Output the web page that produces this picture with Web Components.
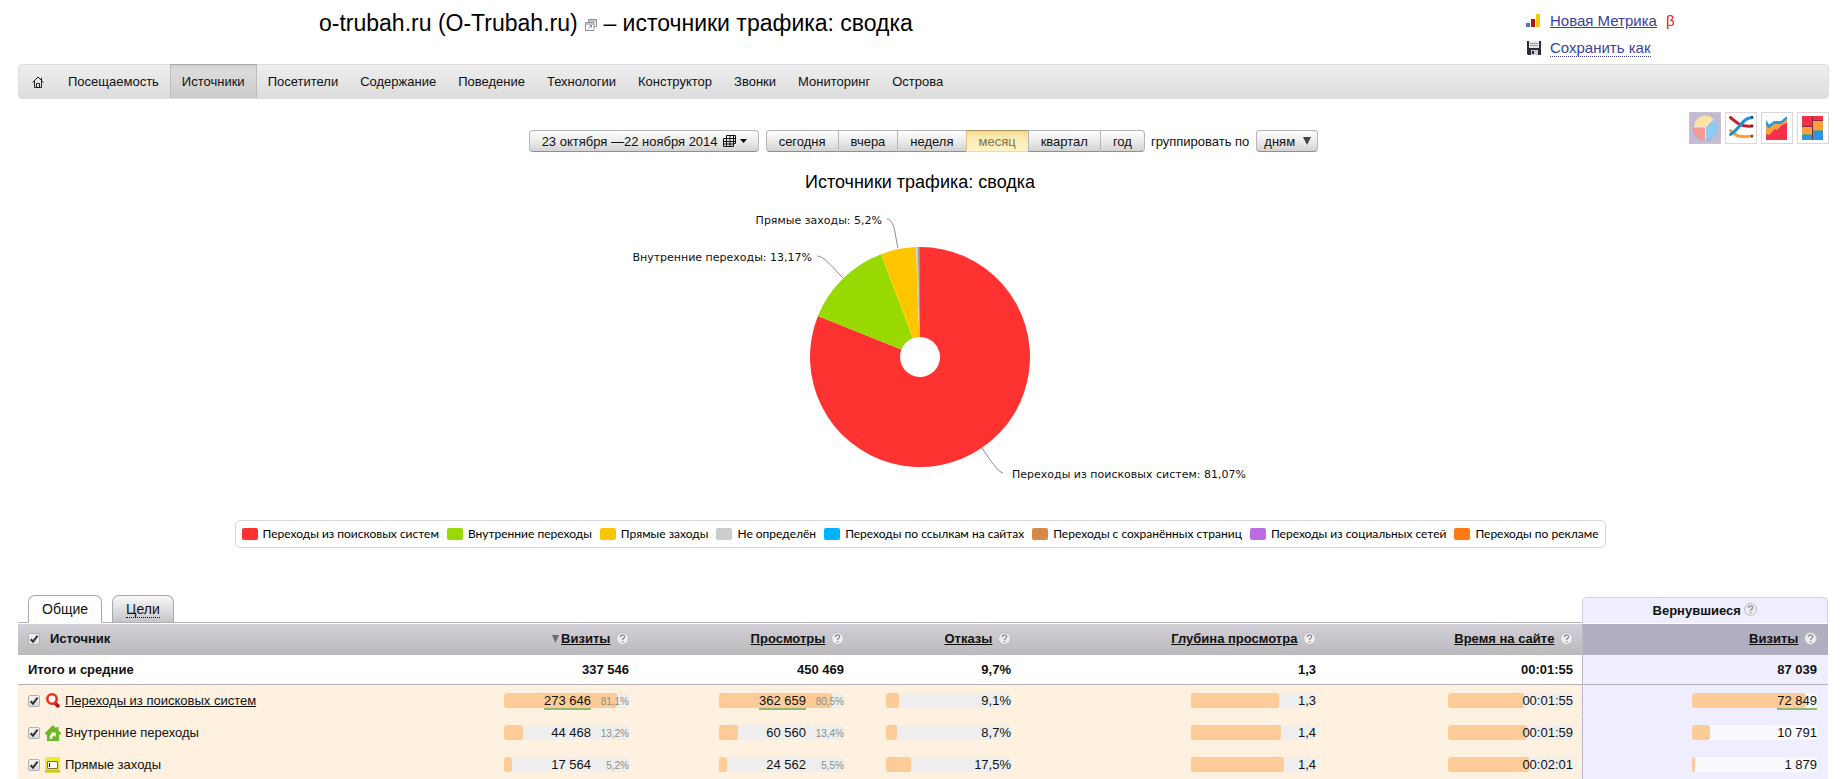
<!DOCTYPE html>
<html lang="ru">
<head>
<meta charset="utf-8">
<title>Источники трафика: сводка</title>
<style>
html{background:#fff}
body{margin:0;font:13px/15px "Liberation Sans",Arial,sans-serif;color:#111;overflow-x:hidden}
</style>
</head>
<body>
<metrika-app></metrika-app>

<script>
function define(name, html, setup) {
  customElements.define(name, class extends HTMLElement {
    connectedCallback() {
      if (this.shadowRoot) return;
      const t = document.createElement('template');
      t.innerHTML = html;
      this.attachShadow({ mode: 'open' }).append(t.content.cloneNode(true));
      if (setup) setup.call(this, this.shadowRoot);
    }
  });
}

/* Round question mark */
define('help-mark', `<style>
:host{display:inline-block;width:13px;height:13px;vertical-align:middle}
svg{display:block}
</style>
<svg width="13" height="13" viewBox="0 0 13 13" role="img" aria-label="Справка"><circle cx="6.5" cy="6.5" r="6" fill="#ecebee" stroke="#bdbcc2"/><path d="M4.4 5c0-2.8 4.2-2.7 4.2-.3 0 1.500-2 1.500-2 3.200M6.600 9v1.400" fill="none" stroke="#8d8d93" stroke-width="1.300"/></svg>`);

/* Tick box */
define('tick-box', `<style>
:host{display:inline-grid;width:12px;height:12px}
input,svg{grid-area:1/1;margin:0}
input{appearance:none;width:12px;height:12px;border:1px solid #b3b1b0;border-radius:2px;background:linear-gradient(#f2f2f2,#dcdcdc)}
svg{pointer-events:none;display:none}
input:checked+svg{display:block}
</style>
<input type="checkbox" checked><svg width="12" height="12" viewBox="0 0 12 12"><path d="M2.700 6.200 5 8.600 9.600 2.600" fill="none" stroke="#333" stroke-width="2"/></svg>`,
function (r) { r.querySelector('input').setAttribute('aria-label', this.getAttribute('label')); });

/* Number over a horizontal bar */
define('value-bar', `<style>
:host{display:flex;justify-content:flex-end;width:125px;height:15px;line-height:15px;margin-left:auto;border-radius:3px;position:relative;background:var(--track,#eeeeef)}
i{position:absolute;left:0;top:0;bottom:0;border-radius:3px;background:#fdcb98}
span{position:relative}
::slotted(small){display:inline-block;width:38px;font-size:10px;color:#8b9084}
</style>
<i></i><span><slot></slot></span>`,
function (r) { r.querySelector('i').style.width = this.getAttribute('fill') + '%'; });

/* Page heading and account links */
define('page-header', `<style>
:host{display:flex;justify-content:space-between;align-items:flex-start;height:64px;padding:0 166px 0 319px;box-sizing:border-box}
h1{margin:10px 0 0;font-size:23px;line-height:26px;font-weight:400;color:#000;white-space:nowrap}
h1 svg{margin-left:1px}
ul{list-style:none;margin:7px 0 0;padding:0;width:148px;font-size:15px;line-height:17px}
li{display:flex;align-items:center;height:27px;white-space:nowrap}
li svg{flex:none;margin-right:9px}
a{color:#3c3f9e}
a.save{text-decoration:none;border-bottom:1px dotted #3c3f9e}
b{font-weight:400;color:#d22;margin-left:9px}
</style>
<h1>o-trubah.ru (O-Trubah.ru) <svg width="12" height="12" viewBox="0 0 12 12" fill="none" stroke="#8a9299"><path d="M3.500 3V.5h8v7H9M3.500 2h8M.5 3.500H9v8H.5zM.5 5h8.500M3.500 9.500l3-3M4.500 6.500h2v2"/></svg> – источники трафика: сводка</h1>
<ul>
<li><svg width="15" height="13" viewBox="0 0 15 13"><path fill="#5a74b8" d="M0 9h4v4H0z"/><path fill="#b5121b" d="M5 5h4v8H5z"/><path fill="#f6c915" d="M10 0h4v13h-4z"/></svg><a href="#new">Новая Метрика</a><b>β</b></li>
<li><svg width="15" height="14" viewBox="0 0 15 14"><path fill="#2e2e33" d="M1 0h14v14H2l-1-1z"/><path fill="#e4e6ea" d="M3 0h10v7H3z"/><path stroke="#8ba0bd" d="M4 2.500h8M4 4.500h8"/><path fill="#c9cbd0" d="M5 9h7v5H5z"/><path fill="#2e2e33" d="M6 10h2v3H6z"/></svg><a class="save" href="#save">Сохранить как</a></li>
</ul>`);

/* Main navigation */
define('main-nav', `<style>
:host{display:block;margin:0 11px 0 18px}
nav{display:flex;height:33px;border:1px solid #dedede;border-radius:4px;background:linear-gradient(#efefef,#dcdcdc)}
a{display:flex;align-items:center;padding:0 11px;border:solid transparent;border-width:0 1px;margin-left:-1px;color:#111;text-decoration:none;white-space:nowrap}
a.home{padding:0 12px;margin:0}
a[aria-current]{background:linear-gradient(#d2d2d2,#dcdcdc 20%,#cbcbcb);border-color:#bdbdbd;box-shadow:0 -1px #aaa}
a[aria-current]~a{padding-right:10px}
svg{display:block}
</style>
<nav>
<a class="home" href="#home" aria-label="Главная"><svg width="12" height="12" viewBox="0 0 12 12" fill="none" stroke="#222"><path d="M.5 6.500 6 1l5.500 5.500M2.500 5v6.500h7V5M9.500 4V1.500M4.500 11V7.500h3V11"/></svg></a>
<a href="#1">Посещаемость</a><a href="#2" aria-current="page">Источники</a><a href="#3">Посетители</a><a href="#4">Содержание</a><a href="#5">Поведение</a><a href="#6">Технологии</a><a href="#7">Конструктор</a><a href="#8">Звонки</a><a href="#9">Мониторинг</a><a href="#10">Острова</a>
</nav>`);

/* Period, grouping and chart type */
define('report-toolbar', `<style>
:host{display:grid;grid-template-columns:1fr auto 1fr;margin:13px 11px 0 18px;align-items:start}
.mid{grid-column:2;display:flex;align-items:center;margin-top:18px;white-space:nowrap}
button,select{font:inherit;color:#111;height:22px;margin:0;box-sizing:border-box;border:1px solid #b5b5b5;border-bottom-color:#8f8f8f;border-radius:4px;background:linear-gradient(#fdfdfd,#ececec 50%,#d2d2d2)}
.date{display:flex;align-items:center;width:230px;padding:0 0 0 12px;margin-right:7px}
.date svg{flex:none;margin-left:5px}
.seg{display:flex;margin-right:6px}
.seg button{padding:0 12px;border-radius:0;border-right-width:0}
.seg button:first-child{border-radius:4px 0 0 4px}
.seg button:last-child{border-radius:0 4px 4px 0;border-right-width:1px}
.seg button[aria-pressed]{background:linear-gradient(#f1d98c,#fbebb0 30%,#fff3c6);color:#7d7449;border-color:#a8935a #d9c587 #eadca5}
.sel{display:grid;margin-left:7px}
.sel select,.sel svg{grid-area:1/1}
select{appearance:none;width:62px;padding:0 0 0 7px}
.sel svg{align-self:center;justify-self:end;margin-right:7px;pointer-events:none}
.types{display:flex;gap:4px;justify-self:end}
.types button{width:32px;height:32px;padding:0;border:1px solid #d9d6de;border-radius:0;background:#fff}
.types button[aria-pressed]{background:#c4bad3;border-color:#c9c1d6}
.types svg{display:block;margin:-1px}
</style>
<div class="mid">
<button class="date">23 октября —22 ноября 2014<svg width="25" height="12" viewBox="0 0 25 12"><path d="M3.500.5h9v8h-2v3H.500v-8h3zM.5 6.500h12M.5 9h10M3.500 3.500h9M3.500 3.500v8M7 .5v11M10.500.5v8" fill="none" stroke="#111"/><path d="M17 4h7l-3.500 4z"/></svg></button>
<div class="seg"><button>сегодня</button><button>вчера</button><button>неделя</button><button aria-pressed="true">месяц</button><button>квартал</button><button>год</button></div>
<label for="grp">группировать по</label>
<span class="sel"><select id="grp"><option>дням</option><option>неделям</option><option>месяцам</option></select><svg width="8" height="8" viewBox="0 0 8 8"><path d="M0 0h8L4 8z" fill="#444"/></svg></span>
</div>
<div class="types">
<button aria-pressed="true" aria-label="Круговая диаграмма"><svg width="32" height="32" viewBox="0 0 32 32"><circle cx="16" cy="16.500" r="12" fill="#8e8aa8" opacity=".4"/><path d="M16.500 15 5 15A11.500 11.500 0 0 1 24.500 7z" fill="#f9e4a6"/><path d="M16 15.500v12A11.500 11.500 0 0 1 4.500 15.500z" fill="#f69a92"/><path d="M17 15.500 25.500 8A11.500 11.500 0 0 1 17 27.500z" fill="#8cccf2"/><path d="M4.500 15h12v13M16.500 15l8.500-8" stroke="#efe6ee" fill="none"/></svg></button>
<button aria-label="Линии"><svg width="32" height="32" viewBox="0 0 32 32" fill="none" stroke-width="3" stroke-linecap="round"><path d="M5.500 5.500C12 11 15 15 27 14" stroke="#c4202c"/><path d="M5.500 18.500C11 25 17 25.500 27 24" stroke="#f0a040"/><path d="M27 5.500C17 6 16 16 5.500 22.500" stroke="#1f8fe0"/><path d="M27 5v.5M27 13.800v.5M27 24v.5" stroke="#333" stroke-width="2"/></svg></button>
<button aria-label="Области"><svg width="32" height="32" viewBox="0 0 32 32"><path fill="#2d9bd0" d="M5 8 8 12.500 13 9H20L26 4V12L5 22z"/><path fill="#f7a23e" d="M5 13 8 16.500 13 12H20L26 7V14L5 26z"/><path fill="#f5304a" d="M5 22 8 23 14 17 16 18 21 13 26 11V28H5z"/></svg></button>
<button aria-label="Колонки"><svg width="32" height="32" viewBox="0 0 32 32"><path fill="#f5304a" d="M5 4h10v11H5zM16 4h10v5H16z"/><path fill="#f7a23e" d="M5 15h10v8H5zM16 9h10v10H16z"/><path fill="#2a97e6" d="M5 23h10v5H5zM16 19h10v9H16z"/><path d="M15.500 4v24M5 14.500h10M16 8.500h10" stroke="#8b2b38"/><path d="M5 22.500h10M16 18.500h10" stroke="#7aa36a"/></svg></button>
</div>`);

/* Donut chart with its legend */
define('source-chart', `<style>
:host{display:flex;flex-direction:column;align-items:center}
h2{margin:18px 0 6px;font-size:18px;line-height:24px;font-weight:400;color:#000}
svg{display:block;font:11px "DejaVu Sans",Verdana,sans-serif}
ul{display:flex;gap:8px;list-style:none;margin:20px 0 0;padding:0 6px;height:26px;border:1px solid #d8d8d8;border-radius:5px;font:12px/16px Lato,"Open Sans",sans-serif;color:#000;white-space:nowrap}
li{display:flex;align-items:center;gap:5px}
li i{width:16px;height:12px;border-radius:2px}
</style>
<h2>Источники трафика: сводка</h2>
<svg width="680" height="300" viewBox="580 200 680 300">
<g id="pie"></g>
<g fill="none" stroke="#888"><path d="M887 219C895 220 895 236 898 248"/><path d="M817 256C824 256 832 267 843 278"/><path d="M982 448C990 460 998 472 1003 473"/></g>
<g fill="#111"><text x="882" y="224" text-anchor="end">Прямые заходы: 5,2%</text><text x="812" y="261" text-anchor="end">Внутренние переходы: 13,17%</text><text x="1012" y="478">Переходы из поисковых систем: 81,07%</text></g>
</svg>
<ul></ul>`,
function (r) {
  const point = (f, R) => {
    const a = f * Math.PI * 2;
    return (920 + R * Math.sin(a)) + ' ' + (357 - R * Math.cos(a));
  };
  let from = 0, paths = '';
  for (const [share, colour] of [[81.07, '#ff3232'], [13.17, '#97d900'], [5.2, '#ffc600'], [.24, '#ccc'], [.32, '#8f9a9c']]) {
    const to = Math.min(1, from + share / 100), big = to - from > .5 ? 1 : 0;
    paths += `<path fill="${colour}" d="M${point(from, 20)}L${point(from, 110)}A110 110 0 ${big} 1 ${point(to, 110)}L${point(to, 20)}A20 20 0 ${big} 0 ${point(from, 20)}z"/>`;
    from = to;
  }
  r.getElementById('pie').innerHTML = paths;
  r.querySelector('ul').innerHTML = [
    ['#ff3232', 'Переходы из поисковых систем'], ['#97d900', 'Внутренние переходы'], ['#fac500', 'Прямые заходы'],
    ['#ccc', 'Не определён'], ['#00b2ff', 'Переходы по ссылкам на сайтах'], ['#d88848', 'Переходы с сохранённых страниц'],
    ['#bd6ce6', 'Переходы из социальных сетей'], ['#ff7a10', 'Переходы по рекламе']
  ].map(([c, t]) => `<li><i style="background:${c}"></i>${t}</li>`).join('');
});

/* Table of traffic sources */
define('source-table', `<style>
:host{display:block;margin:47px 12px 0 18px}
table{width:100%;table-layout:fixed;border-collapse:separate;border-spacing:0}
th,td{padding:0 9px 0 10px;text-align:right;white-space:nowrap}
th:first-child,td:first-child{text-align:left}
.c2{width:149px}.c3{width:215px}.c4{width:167px}.c5{width:305px}.c6{width:257px}.c7{width:246px}
.top td,.top th{padding:0;vertical-align:bottom}
.top td{border-bottom:1px solid #b2b0b5}
.tabs{display:flex;gap:10px;padding-left:10px;height:27px;font-size:14px}
.tabs button{font:inherit;color:#111;margin:0;height:28px;padding:0 13px;border:1px solid #a9a8ac;border-bottom-color:#b2b0b5;border-radius:7px 7px 0 0;background:linear-gradient(#f8f8f8,#c6c6ca)}
.tabs button[aria-selected=true]{background:#fff;border-bottom-color:#fff}
.tabs span{border-bottom:1px dotted #111}
.group{height:26px;border:1px solid #cfcfe2;border-bottom:0;border-radius:5px 5px 0 0;background:#eeeeff;text-align:center;color:#111;box-sizing:border-box;line-height:26px}
.group help-mark{margin:-4px 0 0 0}
.head th{height:29px;padding-bottom:2px;border-top:1px solid #fff;background:linear-gradient(#d3d1d8,#b9b8bb)}
.head a{color:#111}
.head help-mark{margin:-2px 0 0 2px}
.head svg{margin-right:2px}
.head tick-box{margin-right:10px}
.head tick-box,.name{vertical-align:middle}
.total td{height:29px;font-weight:700;border-bottom:1px solid #b2b0b5}
.data td{height:31px;background:#fff1df;border-bottom:1px solid #fdefe2}
tr .c7.c7{padding-right:11px;border-left:1px solid #b9b8cc;background-color:#eeeeff;--track:#f9f9fc}
.head .c7.c7{background:#b0aec1}
.data .c7.c7{border-bottom-color:#eeeeff}
.src{display:flex;align-items:center}
.src svg{margin:0 4px 0 5px}
.src a{color:#111}
.num{color:#111;text-decoration:none;border-bottom:2px solid #8dbb73}
</style>
<table>
<colgroup><col><col class="c2"><col class="c3"><col class="c4"><col class="c5"><col class="c6"><col class="c7"></colgroup>
<thead>
<tr class="top"><td colspan="6"><div class="tabs" role="tablist"><button role="tab" aria-selected="true">Общие</button><button role="tab" aria-selected="false"><span>Цели</span></button></div></td><th scope="colgroup"><div class="group">Вернувшиеся <help-mark></help-mark></div></th></tr>
<tr class="head"><th scope="col"><tick-box label="Выбрать все"></tick-box><span class="name">Источник</span></th>
<th scope="col"><svg width="7" height="8" viewBox="0 0 7 8"><path d="M0 0h7L3.500 8z" fill="#6d6c72"/></svg><a href="#v">Визиты</a> <help-mark></help-mark></th>
<th scope="col"><a href="#p">Просмотры</a> <help-mark></help-mark></th>
<th scope="col"><a href="#o">Отказы</a> <help-mark></help-mark></th>
<th scope="col"><a href="#g">Глубина просмотра</a> <help-mark></help-mark></th>
<th scope="col"><a href="#t">Время на сайте</a> <help-mark></help-mark></th>
<th scope="col" class="c7"><a href="#r">Визиты</a> <help-mark></help-mark></th></tr>
</thead>
<tbody>
<tr class="total"><td>Итого и средние</td><td>337 546</td><td>450 469</td><td>9,7%</td><td>1,3</td><td>00:01:55</td><td class="c7">87 039</td></tr>
<tr class="data"><td><div class="src"><tick-box label="Переходы из поисковых систем"></tick-box><svg width="16" height="16" viewBox="0 0 16 16" fill="none"><path d="m9.500 9.500 4.500 4.500" stroke="#b3121a" stroke-width="3.500"/><circle cx="7" cy="6" r="4.700" fill="#fff" stroke="#e8301f" stroke-width="2.600"/></svg><a href="#search">Переходы из поисковых систем</a></div></td>
<td><value-bar fill="90"><a class="num" href="#a">273 646</a><small>81,1%</small></value-bar></td><td><value-bar fill="90"><a class="num" href="#b">362 659</a><small>80,5%</small></value-bar></td><td><value-bar fill="10">9,1%</value-bar></td><td><value-bar fill="70">1,3</value-bar></td><td><value-bar fill="61">00:01:55</value-bar></td><td class="c7"><value-bar fill="91"><a class="num" href="#c">72 849</a></value-bar></td></tr>
<tr class="data"><td><div class="src"><tick-box label="Внутренние переходы"></tick-box><svg width="16" height="16" viewBox="0 0 16 16"><path d="M8 0 0 8v1.500h2V16h12V9.500h2V8l-2.500-2.500V2h-2v1.500z" fill="#6fb52a"/><path d="M5 14c-1-3 .2-4.500 2-5L5.800 7.500h5V12L9.400 10.800C7.800 11 7 12 7.200 14z" fill="#f4ffe0"/></svg><span>Внутренние переходы</span></div></td>
<td><value-bar fill="15">44 468<small>13,2%</small></value-bar></td><td><value-bar fill="15">60 560<small>13,4%</small></value-bar></td><td><value-bar fill="9">8,7%</value-bar></td><td><value-bar fill="72">1,4</value-bar></td><td><value-bar fill="63">00:01:59</value-bar></td><td class="c7"><value-bar fill="14">10 791</value-bar></td></tr>
<tr class="data"><td><div class="src"><tick-box label="Прямые заходы"></tick-box><svg width="16" height="16" viewBox="0 0 16 16"><rect width="15" height="15.500" rx="1" fill="#f0e92e"/><path d="M0 13h15v2.500H0z" fill="#cfc51c"/><path d="M2.500 4.500h10v7h-10z" fill="#fff" stroke="#77733a"/><path d="M4.500 6v4" stroke="#111"/></svg><span>Прямые заходы</span></div></td>
<td><value-bar fill="6">17 564<small>5,2%</small></value-bar></td><td><value-bar fill="6">24 562<small>5,5%</small></value-bar></td><td><value-bar fill="20">17,5%</value-bar></td><td><value-bar fill="74">1,4</value-bar></td><td><value-bar fill="65">00:02:01</value-bar></td><td class="c7"><value-bar fill="2">1 879</value-bar></td></tr>
</tbody>
</table>`);

define('metrika-app', `<style>:host{display:block}</style>
<page-header></page-header>
<main-nav></main-nav>
<report-toolbar></report-toolbar>
<source-chart></source-chart>
<source-table></source-table>`);
</script>
</body>
</html>
